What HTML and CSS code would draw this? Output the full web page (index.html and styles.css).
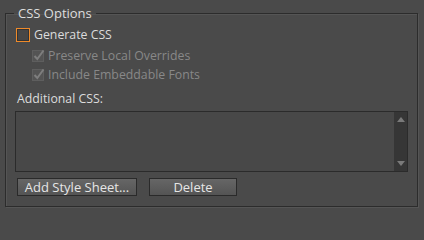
FILE: index.html
```html
<!DOCTYPE html>
<html>
<head>
<meta charset="utf-8">
<link rel="stylesheet" href="styles.css">
</head>
<body>
<fieldset class="panel">
  <legend class="legend">CSS Options</legend>
  <div class="row row-main">
    <span class="box box-focus"></span>
    <span class="label">Generate CSS</span>
  </div>
  <div class="row row-sub">
    <span class="box box-disabled">
      <svg class="check" width="14" height="14" viewBox="0 0 14 14"><path d="M2.5 7 L5.3 10 L11.5 1.5" fill="none" stroke="#7e7e7e" stroke-width="2"/></svg>
    </span>
    <span class="label label-disabled">Preserve Local Overrides</span>
  </div>
  <div class="row row-sub">
    <span class="box box-disabled">
      <svg class="check" width="14" height="14" viewBox="0 0 14 14"><path d="M2.5 7 L5.3 10 L11.5 1.5" fill="none" stroke="#7e7e7e" stroke-width="2"/></svg>
    </span>
    <span class="label label-disabled">Include Embeddable Fonts</span>
  </div>
  <div class="section-label">Additional CSS:</div>
  <div class="textbox">
    <div class="textbox-area"></div>
    <div class="scrollbar">
      <span class="arrow arrow-up"></span>
      <span class="arrow arrow-down"></span>
    </div>
  </div>
  <div class="buttons">
    <button class="btn btn-add">Add Style Sheet...</button>
    <button class="btn btn-delete">Delete</button>
  </div>
</fieldset>
</body>
</html>
```
FILE: styles.css
```css
html, body {
  margin: 0;
  padding: 0;
  background: #4a4a4a;
  width: 424px;
  height: 213px;
  overflow: hidden;
  font-family: "Open Sans", "Noto Sans", sans-serif;
  font-size: 12.3px;
  color: #dcdcdc;
}

.panel {
  margin: 5px 6px 0 5px;
  padding: 0 0 10px 0;
  border: 1px solid #2c2c2c;
  box-shadow: 1px 1px 0 #555555, inset 1px 1px 0 #555555;
  min-width: 0;
}

.legend {
  margin-left: 8px;
  padding: 0 4px;
  font-size: 13px;
  line-height: 17px;
  color: #dedede;
}

.row {
  display: flex;
  align-items: center;
}

.row-main {
  margin-top: 4px;
  height: 17px;
  padding-left: 10px;
}

.row-sub {
  height: 19px;
  padding-left: 26px;
}

.row-main + .row-sub {
  margin-top: 3px;
}

.box {
  box-sizing: border-box;
  flex: none;
  position: relative;
}

.box-focus {
  width: 14px;
  height: 14px;
  border: 1px solid #ee8a2a;
  background: #474747;
  box-shadow: inset 0 0 0 1px #333333;
}

.box-disabled {
  width: 12px;
  height: 12px;
  border: 1px solid #5e5e5e;
  background: #545454;
}

.check {
  position: absolute;
  left: -1px;
  top: -2px;
  overflow: visible;
}

.label {
  margin-left: 4px;
  line-height: 17px;
  white-space: nowrap;
}

.label-disabled {
  color: #888888;
}

.section-label {
  margin-top: 7px;
  padding-left: 11px;
  line-height: 16px;
  height: 16px;
}

.textbox {
  display: flex;
  box-sizing: border-box;
  margin: 4px 9px 0 9px;
  height: 61px;
  border: 1px solid #2b2b2b;
  background: #484848;
}

.textbox-area {
  flex: 1;
}

.scrollbar {
  width: 13px;
  background: #363636;
  display: flex;
  flex-direction: column;
  justify-content: space-between;
  align-items: center;
  padding: 5px 0;
}

.arrow {
  width: 0;
  height: 0;
  border-left: 4px solid transparent;
  border-right: 4px solid transparent;
}

.arrow-up {
  border-bottom: 5px solid #7a7a7a;
}

.arrow-down {
  border-top: 5px solid #7a7a7a;
}

.buttons {
  display: flex;
  gap: 12px;
  margin-top: 6px;
  padding-left: 11px;
}

.btn {
  box-sizing: border-box;
  height: 18px;
  padding: 0;
  border: 1px solid #2a2a2a;
  background: linear-gradient(#666666, #545454);
  color: #e6e6e6;
  font-family: "Open Sans", "Noto Sans", sans-serif;
  font-size: 13px;
  line-height: 16px;
}

.btn-add {
  width: 120px;
}

.btn-delete {
  width: 88px;
}
```
